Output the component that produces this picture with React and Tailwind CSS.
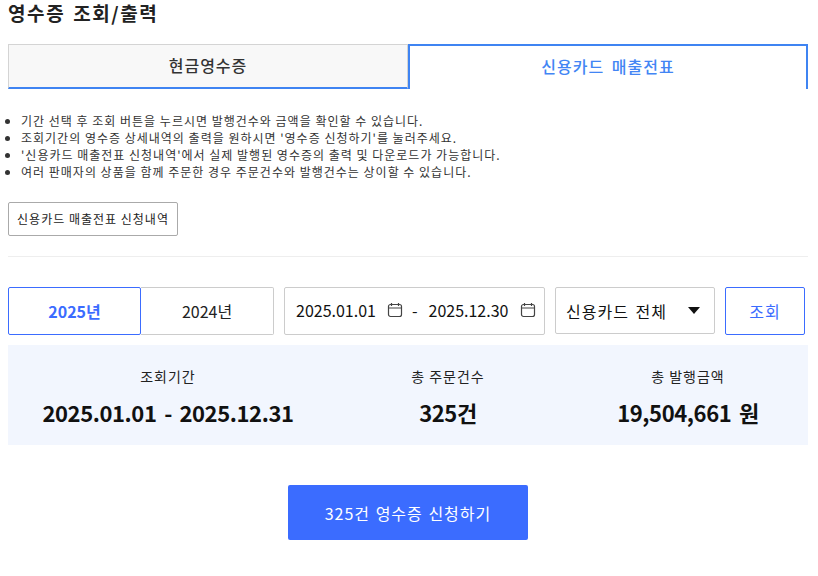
const FONT = { fontFamily: '"Noto Sans CJK KR", "Noto Sans", sans-serif' }

const NOTES = [
  '기간 선택 후 조회 버튼을 누르시면 발행건수와 금액을 확인할 수 있습니다.',
  "조회기간의 영수증 상세내역의 출력을 원하시면 '영수증 신청하기'를 눌러주세요.",
  "'신용카드 매출전표 신청내역'에서 실제 발행된 영수증의 출력 및 다운로드가 가능합니다.",
  '여러 판매자의 상품을 함께 주문한 경우 주문건수와 발행건수는 상이할 수 있습니다.',
]

function Calendar() {
  return (
    <svg width="16" height="16" viewBox="0 0 16 16" fill="none" stroke="#444" strokeWidth="1.2" className="block shrink-0">
      <rect x="1.5" y="2.5" width="13" height="12" rx="2" />
      <path d="M1.5 6h13M4.5 1v3M11.5 1v3" />
    </svg>
  )
}

function Stat({ label, width, children }) {
  return (
    <div className={`flex flex-col items-center ${width}`}>
      <div className="text-[14px] leading-[20px] tracking-[1px] text-[#222]">{label}</div>
      <div className="mt-[11px] text-[22px] leading-[30px] font-bold tracking-[-0.4px] text-[#111] [word-spacing:3px]">{children}</div>
    </div>
  )
}

export default function App() {
  return (
    <div className="h-[576px] w-[818px] overflow-hidden bg-white pl-2" style={FONT}>
      <div className="w-[800px]">
        <h1 className="h-[44px] text-[19px] leading-[26px] font-bold tracking-[1.6px] text-[#222] [word-spacing:2px]">영수증 조회/출력</h1>

        <div className="flex h-[45px]">
          <div className="flex w-[400px] items-center justify-center border border-[#d4d4d4] border-b-2 border-b-[#3f84f2] bg-[#f8f8f8] pb-[2px] text-[16px] font-medium tracking-[1px] text-[#333]">
            현금영수증
          </div>
          <div className="flex w-[400px] items-center justify-center border-x-2 border-t-2 border-[#3f84f2] pb-[4px] text-[16px] font-medium tracking-[1px] text-[#4285f4] [word-spacing:3px]">
            신용카드 매출전표
          </div>
        </div>

        <ul className="mt-[23px] list-disc pl-[13px] text-[12px] leading-[17px] tracking-[1px] text-[#333]">
          {NOTES.map((n) => (
            <li key={n}>{n}</li>
          ))}
        </ul>

        <button className="mt-[22px] flex h-[34px] w-[170px] items-center justify-center rounded-[2px] border border-[#aaa] text-[12px] tracking-[1px] text-[#222]">
          신용카드 매출전표 신청내역
        </button>

        <div className="mt-[20px] border-t border-[#eee]" />

        <div className="mt-[30px] flex h-[48px] items-start">
          <button className="h-[48px] w-[133px] rounded-[2px] border border-[#3b6cff] text-[16px] font-bold text-[#3b6cff]">2025년</button>
          <button className="h-[48px] w-[133px] rounded-r-[2px] border border-l-0 border-[#ccc] text-[16px] text-[#222]">2024년</button>
          <div className="ml-[10px] flex h-[48px] w-[261px] items-center rounded-[2px] border border-[#ccc] pb-[2px] pl-[11px] text-[16px] text-[#111]">
            <span>2025.01.01</span>
            <span className="ml-[11px]"><Calendar /></span>
            <span className="ml-[9px]">-</span>
            <span className="ml-[11px]">2025.12.30</span>
            <span className="ml-[12px]"><Calendar /></span>
          </div>
          <div className="ml-[10px] flex h-[47px] w-[160px] items-center justify-between rounded-[2px] border border-[#ccc] pr-[14px] pl-[10px] text-[16px] tracking-[1px] text-[#111] [word-spacing:2px]">
            <span>신용카드 전체</span>
            <svg width="12" height="7" viewBox="0 0 12 7" fill="#111"><path d="M0 0h12L6 7z" /></svg>
          </div>
          <button className="ml-[10px] h-[48px] w-[80px] rounded-[2px] border border-[#3b6cff] text-[16px] tracking-[1px] text-[#3b6cff]">조회</button>
        </div>

        <div className="mt-[10px] flex h-[100px] items-center bg-[#f2f6fe] pt-[3px]">
          <Stat label="조회기간" width="w-[320px]">2025.01.01 - 2025.12.31</Stat>
          <Stat label="총 주문건수" width="w-[240px]">325건</Stat>
          <Stat label="총 발행금액" width="w-[240px]">19,504,661 원</Stat>
        </div>

        <div className="mt-[40px] flex justify-center">
          <button className="h-[55px] w-[240px] rounded-[2px] bg-[#3b6cff] text-[16px] tracking-[1px] text-white [word-spacing:1px]">325건 영수증 신청하기</button>
        </div>
      </div>
    </div>
  )
}
